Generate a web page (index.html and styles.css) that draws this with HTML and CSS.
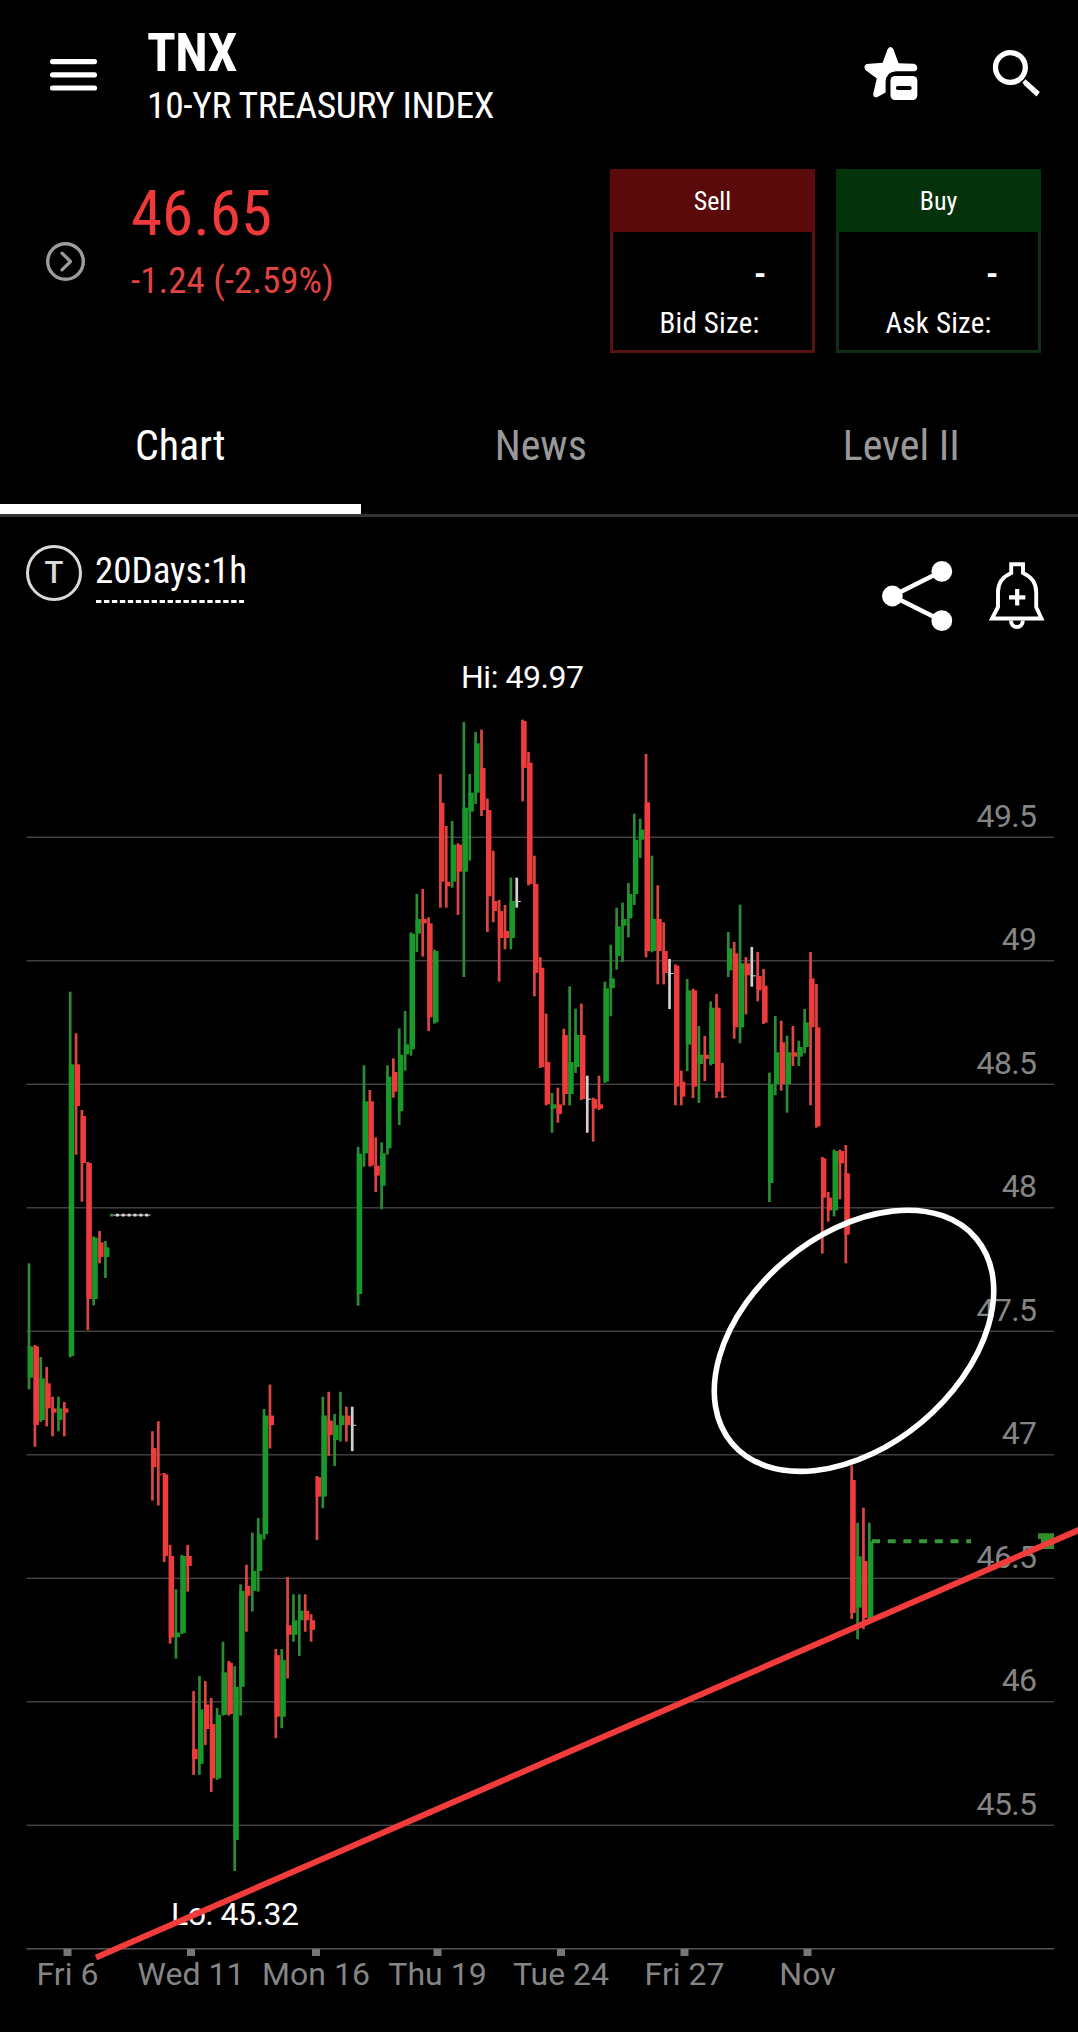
FILE: index.html
```html
<!DOCTYPE html>
<html lang="en">
<head>
<meta charset="utf-8">
<title>TNX</title>
<link rel="stylesheet" href="styles.css">
</head>
<body>
<div class="screen">
  <header class="topbar">
    <svg class="icon-menu" width="48" height="32" viewBox="0 0 48 32"><path d="M2.5 2.6H44.500M2.5 15.8H44.500M2.5 29H44.500" stroke="#fff" stroke-width="5.2" stroke-linecap="round"/></svg>
    <div class="titles">
      <h1 class="symbol"><span>TNX</span></h1>
      <p class="name"><span>10-YR TREASURY INDEX</span></p>
    </div>
    <svg class="icon-star" width="56" height="56" viewBox="862 45 56 56">
      <path fill="#fff" d="M887.6 49.3Q890.5 44.6 893.4 49.3L898.6 63.2L914 63.8Q917.3 65 917.3 68Q917.3 71 914 71.2H896Q885.8 71.8 885.6 82V92.5L877.5 97Q873.2 98.3 873.2 94L876.8 78.6L865.4 70Q863 66.500 866.5 64L882.6 62.800Z"/>
      <rect x="890.5" y="76" width="26.800" height="24" rx="4.500" fill="#fff"/>
      <rect x="896" y="86" width="15.600" height="4" rx="1.800" fill="#000"/>
    </svg>
    <svg class="icon-search" width="50" height="50" viewBox="991 48 50 50">
      <circle cx="1010.400" cy="67.500" r="14.900" fill="none" stroke="#fff" stroke-width="5.300"/>
      <path d="M1022.500 82.500L1025.500 79.200L1039.800 92L1036.500 96.500L1024.500 85.500Z" fill="#fff"/>
    </svg>
  </header>

  <section class="quote">
    <svg class="icon-expand" width="40" height="40" viewBox="0 0 40 40" fill="none" stroke="#9c9c9c"><circle cx="20.500" cy="20.500" r="17.800" stroke-width="3.400"/><path d="M17 12.200L25.500 20.500L17 28.800" stroke-width="3.200" stroke-linecap="round" stroke-linejoin="round"/></svg>
    <div class="prices">
      <div class="last"><span>46.65</span></div>
      <div class="change"><span>-1.24 (-2.59%)</span></div>
    </div>
    <div class="order sell">
      <div class="side"><span>Sell</span></div>
      <div class="amount">-</div>
      <div class="size"><span>Bid Size:</span></div>
    </div>
    <div class="order buy">
      <div class="side"><span>Buy</span></div>
      <div class="amount">-</div>
      <div class="size"><span>Ask Size:</span></div>
    </div>
  </section>

  <nav class="tabs">
    <div class="tab active"><span>Chart</span></div>
    <div class="tab"><span>News</span></div>
    <div class="tab"><span>Level II</span></div>
  </nav>

  <div class="toolbar">
    <div class="type">T</div>
    <div class="range"><span>20Days:1h</span><svg width="149" height="3" viewBox="0 0 149 3"><path d="M0 1.500H148" stroke="#fff" stroke-width="3" stroke-dasharray="5.400 2.550"/></svg></div>
    <svg class="icon-share" width="72" height="74" viewBox="881 559 72 74"><path d="M941.800 571.300L892.400 596L941.800 620.700" fill="none" stroke="#fff" stroke-width="4.600"/><g fill="#fff"><circle cx="941.800" cy="571.300" r="10.400"/><circle cx="892.400" cy="596" r="10.400"/><circle cx="941.800" cy="620.700" r="10.400"/></g></svg>
    <svg class="icon-bell" width="58" height="70" viewBox="988 561 58 70" fill="none" stroke="#fff" stroke-width="4">
      <path d="M1011.200 573V564.300H1023V573C1032 577 1036.200 584 1036.200 592V607L1041.500 618.500H992L998 607V592C998 584 1002 577 1011.200 573Z" stroke-width="3.900"/>
      <path d="M1011 620.500C1011 629.200 1022.800 629.200 1022.800 620.500"/>
      <path d="M1009 597.300H1025.300M1017.200 589V605.600" stroke-width="4.200"/>
    </svg>
  </div>

  <svg class="chart" width="1078" height="1382" viewBox="0 650 1078 1382">
    <g id="grid"></g>
    <g id="candles"></g>
    <path d="M872 1541.300H971" stroke="#3a9639" stroke-width="4" stroke-dasharray="8 7.700"/>
    <path d="M1038 1533.300H1054V1549H1041V1539H1038Z" fill="#2f9028"/>
    <text class="extreme" x="461" y="688" textLength="123">Hi: 49.97</text>
    <text class="extreme" x="171" y="1925" textLength="128">Lo: 45.32</text>
    <ellipse cx="854" cy="1340.800" rx="159.400" ry="105.700" transform="rotate(-40 854 1340.800)" fill="none" stroke="#fff" stroke-width="5.600"/>
    <path d="M96 1957.500L1080 1529.500" stroke="#f23b3b" stroke-width="6"/>
  </svg>
</div>
<script src="chart.js"></script>
</body>
</html>
```
FILE: styles.css
```css
* { box-sizing: border-box; }
body { margin: 0; background: #000; color: #fff; font-family: "Roboto Condensed", Roboto, sans-serif; }
h1, p { margin: 0; font-weight: 400; }
svg { display: block; flex: none; }
.screen { width: 1078px; height: 2032px; background: #000; overflow: hidden; }
.screen span { display: inline-block; white-space: nowrap; font-stretch: 75%; }

.topbar { display: flex; height: 130px; padding-left: 50px; }
.icon-menu { margin-top: 59px; }
.titles { flex: none; width: 764px; padding: 26px 0 0 49px; }
.symbol { height: 54px; font-size: 53px; line-height: 54px; font-weight: 700; letter-spacing: -0.5px; }
.name { height: 48px; font-size: 37.500px; line-height: 50px; letter-spacing: -0.38px; }
.icon-star { margin-top: 45px; }
.icon-search { margin: 48px 0 0 73px; }

.quote { display: flex; height: 246px; padding-left: 45px; }
.icon-expand { margin-top: 111px; }
.prices { width: 525px; padding: 53px 0 0 46px; color: #f03a3a; }
.last { height: 62px; font-size: 63px; line-height: 62px; }
.change { height: 50px; margin-top: 11px; font-size: 37px; line-height: 50px; color: #e04440; }
.order { width: 205px; height: 184px; margin-top: 39px; border: 3px solid; font-size: 29px; }
.order + .order { margin-left: 21px; }
.sell { border-color: #571214; }
.buy { border-color: #0f2e14; }
.side { height: 63px; margin: -3px -3px 0; padding-top: 1px; font-size: 26px; line-height: 63px; text-align: center; }
.sell .side { background: #5a0a0a; }
.buy .side { background: #03320b; }
.amount { height: 68px; padding: 12px 46px 0 0; font-size: 38px; font-weight: 500; line-height: 60px; text-align: right; }
.buy .amount { padding-right: 40px; }
.size { height: 46px; line-height: 47px; text-align: center; letter-spacing: 0.22px; }
.sell .size { padding-right: 6px; }

.tabs { display: flex; height: 141px; border-bottom: 3px solid #333; }
.tab { flex: 0 0 360.500px; height: 138px; font-size: 42px; line-height: 139px; text-align: center; color: #999; }
.tab.active { color: #fff; border-bottom: 10px solid #fff; }

.toolbar { display: flex; height: 133px; padding-left: 26px; }
.type { width: 56px; height: 56px; margin-top: 28px; border: 3.500px solid #d9d9d9; border-radius: 50%; font: 500 31px/50px Roboto, sans-serif; text-align: center; color: #d9d9d9; }
.range { width: 785px; padding: 29px 0 0 14px; font-size: 37px; line-height: 50px; }
.range span { display: block; height: 54px; margin-left: -1px; }
.icon-share { margin: 42px 0 0 14px; }
.icon-bell { margin: 44px 0 0 35px; }

.chart text { font-family: Roboto, sans-serif; font-size: 32px; }
.extreme { fill: #fff; }
.axis { fill: #858585; }
.chart .price { letter-spacing: -0.6px; }
```
FILE: chart.js
```js
const NS = "http://www.w3.org/2000/svg";
const grid = document.getElementById("grid");
const candles = document.getElementById("candles");

function add(parent, tag, attrs, text) {
  const el = document.createElementNS(NS, tag);
  for (const key in attrs) el.setAttribute(key, attrs[key]);
  if (text) el.textContent = text;
  parent.appendChild(el);
}

// Price axis: one line for each half point.
for (let price = 45; price <= 49.5; price += 0.5) {
  const y = 1331.3 - (price - 47.5) * 247;
  add(grid, "rect", { x: 26.5, y: y - 0.7, width: 1027.5, height: 1.4, fill: price === 45 ? "#5c5c5c" : "#444" });
  if (price > 45) add(grid, "text", { class: "axis price", x: 1036.5, y: y - 10.8, "text-anchor": "end" }, String(price));
}

// Date axis.
[[67.500, "Fri 6"], [191, "Wed 11"], [316, "Mon 16"], [437.500, "Thu 19"], [561, "Tue 24"], [684.500, "Fri 27"], [807.500, "Nov"]]
  .forEach(([x, label]) => {
    add(grid, "rect", { x: x - 4, y: 1949, width: 8, height: 7, fill: "#777" });
    add(grid, "text", { class: "axis", x: x, y: 1985, "text-anchor": "middle" }, label);
  });

// Bars: colour, high, body top, body bottom, low; each block has its own origin and unit.
const blocks = [
  { first: 0, origin: 970, unit: 3, bars: `g 880 1129 1223 1258
r 1125 1129 1365 1430
g 1161 1225 1350 1356
r 1191 1240 1315 1369
r 1280 1315 1328 1399
g 1280 1315 1350 1384
r 1296 1315 1328 1399
g 65 283 1158 1162
r 190 283 408 554
r 420 438 579 695
r 576 579 987 1080
g 799 803 987 1006
r 783 817 861 880
g 813 832 861 924` },
  { first: 21, origin: 1370, unit: 2.613, bars: `r 160 204 254 341
r 134 271 274 354
r 269 273 486 502
r 457 486 699 715
g 573 686 698 754
g 483 486 687 690
r 457 486 512 579
r 839 990 1017 1058
g 800 887 1029 1058
r 813 874 938 980
r 857 925 1067 1103
g 883 901 1067 1071
g 710 790 901 903
r 760 765 899 903
g 774 828 1228 1309
g 560 577 828 903
r 509 564 590 684
g 425 525 577 631
g 387 429 525 579
g 102 119 429 443
r 38 119 144 205
r 729 745 906 962
g 729 758 906 936
r 541 667 692 806
g 586 654 692 710
g 586 629 654 747
r 586 629 654 684
r 638 654 679 710
r 277 280 331 444
g 70 119 331 361
r 57 132 170 224
g 115 144 183 251
g 57 119 144 187
r 96 119 144 187
w 96 143 145 212` },
  { first: 56, origin: 900, unit: 3, bars: `g 741 761 1182 1217
g 496 604 760 800
r 570 604 797 800
r 712 797 827 876
g 727 760 857 928
g 496 530 745 764
r 475 516 575 593
g 385 464 634 675
g 333 433 463 512
g 97 101 448 467
g -18 57 101 156
r -33 57 70 170
r 52 70 352 393
g 149 153 367 371` },
  { first: 70, origin: 700, unit: 3, bars: `r 222 308 545 623
r 378 545 559 623
g 363 434 545 563
r 430 434 515 645
g 66 323 515 831
g 222 278 335 482
g 96 130 278 312
r 89 204 330 348
r 296 330 589 696
r 452 603 633 667
r 600 633 714 845
r 615 693 714 748
g 533 603 714 748
w 533 603 606 623
r 59 63 204 304
r 156 188 552 556
r 467 552 819 889
r 771 803 1101 1104
r 941 1086 1213 1216
g 1179 1213 1226 1298
r 1163 1213 1242 1268
r 986 1005 1182 1216
g 859 1086 1182 1216
g 926 1005 1101 1119
r 911 1005 1197 1200
w 1127 1196 1198 1298
r 1193 1197 1226 1325
r 1127 1213 1226 1230
g 845 865 1145 1149
g 734 835 864 949` },
  { first: 100, origin: 740, unit: 3, bars: `g 503 559 648 689
g 488 537 557 666
g 429 462 535 592
g 221 299 462 495
g 236 269 299 354
r 42 187 633 652
g 347 537 633 637
r 436 537 633 733
r 547 633 699 733
w 657 699 701 807
r 673 677 1040 1096
r 992 1025 1070 1096
g 717 751 914 993
r 746 751 1040 1074
g 858 944 972 1089
r 888 944 957 1023
g 784 803 972 976
r 762 803 1055 1074
r 969 1069 1071 1074
g 576 625 691 711
r 606 640 862 896
g 494 670 862 910
r 651 670 706 823
w 621 706 708 740
r 636 708 751 784
r 687 737 848 852` },
  { first: 126, origin: 900, unit: 3, bars: `g 518 552 849 906
g 348 457 552 586
r 362 427 552 572
g 407 457 552 638
r 378 457 470 498
g 422 441 470 498
g 327 367 441 460
r 156 235 382 616
r 252 382 679 683
r 771 775 893 1061
r 876 893 931 965
g 749 753 931 949
r 749 753 790 898
r 735 820 1004 1090` },
  { first: 140, origin: 1190, unit: 3, bars: `r 826 870 1269 1287
g 998 1099 1253 1348
r 953 1113 1284 1317
g 998 1054 1290 1290` }
];
const wickColor = { g: "#2c8c33", r: "#dc4743", w: "#d0d0d0" };
const bodyColor = { g: "#18992a", r: "#ee3b3b", w: "#d0d0d0" };
const left = (index) => 27.7 + index * 5.876;

blocks.forEach(({ first, origin, unit, bars }) => {
  bars.split("\n").forEach((row, n) => {
    const [color, ...values] = row.split(" ");
    const [high, top, bottom, low] = values.map((v) => origin + v / unit);
    const x = left(first + n);
    add(candles, "rect", { x, y: high, width: 2.7, height: low - high, fill: wickColor[color] });
    add(candles, "rect", { x, y: top, width: 5.4, height: Math.max(1, bottom - top), fill: bodyColor[color] });
  });
});

// Flat session: a dotted line.
add(candles, "rect", { x: 113, y: 1214.6, width: 37.5, height: 1, fill: "#c8c8c8" });
for (let i = 14; i <= 20; i++) {
  add(candles, "rect", { x: left(i), y: 1213.7, width: 3, height: 2.8, fill: i === 14 ? "#2c8c33" : "#d8d8d8" });
}
```
